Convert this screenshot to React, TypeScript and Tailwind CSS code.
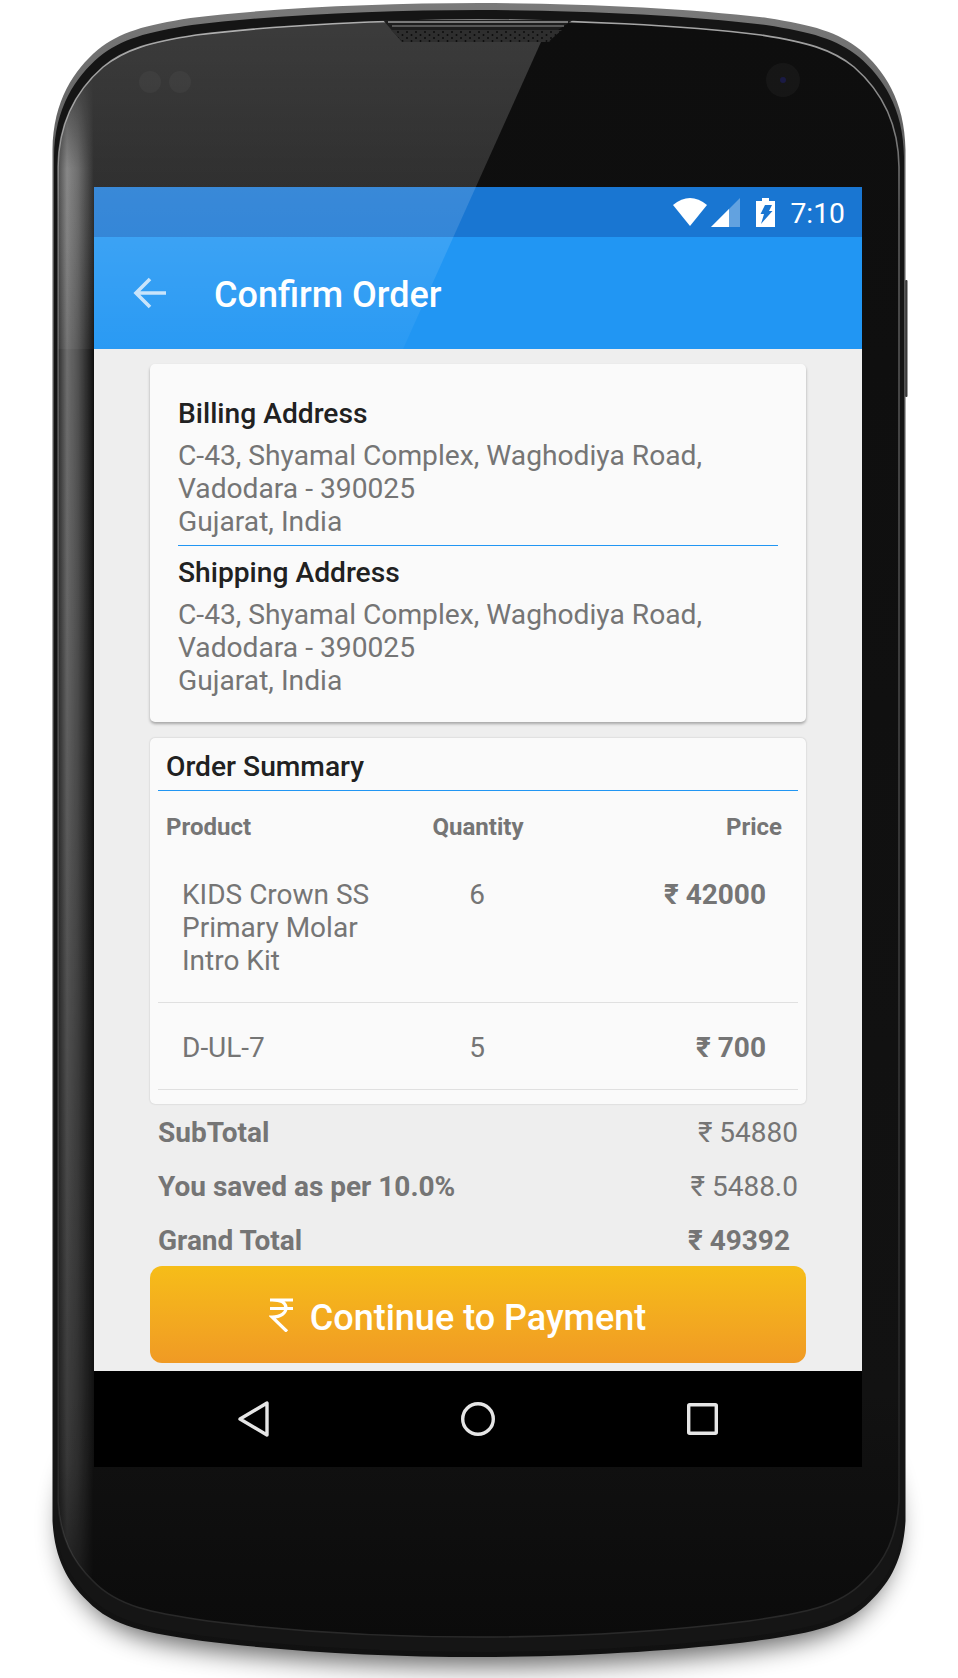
import React from "react";

// outline of the phone, inset by ix / top / bottom
function phoneShape(x0: number, x1: number, y0: number, y1: number) {
  const c = (x0 + x1) / 2;
  return [
    `M${x0} ${y0 + 147}`,
    `C${x0 + 0.5} ${y0 + 97} ${x0 + 22} ${y0 + 67} ${x0 + 45} ${y0 + 47}`,
    `C${x0 + 67} ${y0 + 29} ${x0 + 93} ${y0 + 22} ${x0 + 138} ${y0 + 15}`,
    `C${x0 + 218} ${y0 + 5} ${x0 + 328} ${y0} ${c} ${y0}`,
    `C${x1 - 328} ${y0} ${x1 - 218} ${y0 + 5} ${x1 - 138} ${y0 + 15}`,
    `C${x1 - 93} ${y0 + 22} ${x1 - 67} ${y0 + 29} ${x1 - 45} ${y0 + 47}`,
    `C${x1 - 22} ${y0 + 67} ${x1 - 0.5} ${y0 + 97} ${x1} ${y0 + 147}`,
    `L${x1} ${y1 - 136}`,
    `C${x1 - 2} ${y1 - 100} ${x1 - 14} ${y1 - 76} ${x1 - 35} ${y1 - 56}`,
    `C${x1 - 60} ${y1 - 30} ${x1 - 95} ${y1 - 24} ${x1 - 150} ${y1 - 16}`,
    `C${x1 - 230} ${y1 - 6} ${x1 - 330} ${y1} ${c} ${y1}`,
    `C${x0 + 330} ${y1} ${x0 + 230} ${y1 - 6} ${x0 + 150} ${y1 - 16}`,
    `C${x0 + 95} ${y1 - 24} ${x0 + 60} ${y1 - 30} ${x0 + 35} ${y1 - 56}`,
    `C${x0 + 14} ${y1 - 76} ${x0 + 2} ${y1 - 100} ${x0} ${y1 - 136}`,
    "Z",
  ].join(" ");
}

const OUTER = phoneShape(52.5, 905.5, 3, 1657);
const MID = phoneShape(54, 904, 10, 1652);
const GLASS = phoneShape(58, 899, 20, 1637);

function PhoneBody() {
  return (
    <svg className="absolute inset-0" width="958" height="1678" viewBox="0 0 958 1678">
      <defs>
        <linearGradient id="rim" x1="0" y1="0" x2="0" y2="1">
          <stop offset="0" stopColor="#7a7a7a" />
          <stop offset="0.1" stopColor="#5c5c5c" />
          <stop offset="0.5" stopColor="#404040" />
          <stop offset="0.85" stopColor="#171717" />
          <stop offset="1" stopColor="#111111" />
        </linearGradient>
        <linearGradient id="glassFill" x1="0" y1="0" x2="0" y2="1">
          <stop offset="0" stopColor="#0e0e0e" />
          <stop offset="0.85" stopColor="#121212" />
          <stop offset="1" stopColor="#0b0b0b" />
        </linearGradient>
        <linearGradient id="edgeLine" x1="0" y1="0" x2="0" y2="1">
          <stop offset="0" stopColor="#a8a8a8" />
          <stop offset="0.12" stopColor="#5a5a5a" />
          <stop offset="0.9" stopColor="#222222" />
          <stop offset="1" stopColor="#2a2a2a" />
        </linearGradient>
        <linearGradient id="band" x1="0" y1="0" x2="1" y2="0">
          <stop offset="0" stopColor="#fff" stopOpacity="0.14" />
          <stop offset="0.25" stopColor="#fff" stopOpacity="0.42" />
          <stop offset="0.55" stopColor="#fff" stopOpacity="0.3" />
          <stop offset="1" stopColor="#fff" stopOpacity="0" />
        </linearGradient>
        <linearGradient id="bandFade" x1="0" y1="0" x2="0" y2="1">
          <stop offset="0" stopColor="#000" />
          <stop offset="0.07" stopColor="#fff" />
          <stop offset="0.35" stopColor="#ddd" />
          <stop offset="0.9" stopColor="#666" />
          <stop offset="1" stopColor="#222" />
        </linearGradient>
        <mask id="bandMask">
          <rect x="0" y="60" width="958" height="1560" fill="url(#bandFade)" />
        </mask>
        <clipPath id="glassClip">
          <path d={GLASS} />
        </clipPath>
        <filter id="soft" x="-10%" y="-10%" width="120%" height="120%">
          <feGaussianBlur stdDeviation="13" />
        </filter>
      </defs>
      {/* floor shadow */}
      <path d={phoneShape(62, 896, 1380, 1666)} fill="#000" opacity="0.6" filter="url(#soft)" />
      {/* side button */}
      <rect x="905" y="280" width="2.5" height="117" rx="1" fill="#3a3a3a" />
      <path d={OUTER} fill="url(#rim)" />
      <path d={MID} fill="#151515" />
      <path d={GLASS} fill="url(#glassFill)" stroke="url(#edgeLine)" strokeWidth="1.6" />
      <g clipPath="url(#glassClip)">
        <rect x="58" y="60" width="36" height="1560" fill="url(#band)" mask="url(#bandMask)" />
      </g>
      {/* sensors + camera */}
      <circle cx="150" cy="82" r="11" fill="#fff" opacity="0.035" />
      <circle cx="180" cy="82" r="11" fill="#fff" opacity="0.035" />
      <circle cx="783" cy="80" r="17" fill="#fff" opacity="0.035" />
      <circle cx="783" cy="80" r="3" fill="#1a1a44" />
    </svg>
  );
}

function GlassOverlay() {
  return (
    <svg className="absolute inset-0 pointer-events-none" width="958" height="1678" viewBox="0 0 958 1678">
      <defs>
        <linearGradient id="glare" gradientUnits="userSpaceOnUse" x1="0" y1="20" x2="0" y2="349">
          <stop offset="0" stopColor="#fff" stopOpacity="0.19" />
          <stop offset="0.5" stopColor="#fff" stopOpacity="0.14" />
          <stop offset="0.66" stopColor="#fff" stopOpacity="0.12" />
          <stop offset="1" stopColor="#fff" stopOpacity="0.04" />
        </linearGradient>
        <clipPath id="glareClip">
          <path d={GLASS} />
        </clipPath>
        <pattern id="grille" width="9" height="6" patternUnits="userSpaceOnUse">
          <rect width="9" height="6" fill="#2e2e2e" />
          <circle cx="2" cy="2" r="1" fill="#0c0c0c" />
          <circle cx="6.5" cy="5" r="1" fill="#0c0c0c" />
        </pattern>
      </defs>
      <polygon
        points="50,0 545,0 541,42 403,349 50,349"
        fill="url(#glare)"
        clipPath="url(#glareClip)"
      />
      {/* speaker notch */}
      <path d="M383 20 L573 20 L552 34 L550 42 L402 42 Z" fill="#1d1d1d" />
      <path d="M388 22 L568 22" stroke="#9a9a9a" strokeWidth="1.5" />
      <path d="M392 26 L564 26" stroke="#6a6a6a" strokeWidth="1.5" />
      <path d="M391 30 L562 30 L548 42 L403 42 Z" fill="url(#grille)" />
    </svg>
  );
}

function StatusBar() {
  return (
    <div className="h-[50px] bg-[#1976d2] flex items-center justify-end pr-[17px] text-white">
      <svg width="34" height="28" viewBox="0 0 34 28" fill="#fff">
        <path d="M0 7 Q17 -7 34 7 L17 28 Z" />
      </svg>
      <svg className="ml-[4px]" width="29" height="29" viewBox="0 0 29 29" fill="#fff">
        <path d="M0 29 L29 0 L29 29 Z" opacity="0.32" />
        <path d="M0 29 L18 11 L18 29 Z" />
      </svg>
      <svg className="ml-[16px]" width="19" height="29" viewBox="0 0 19 29" fill="#fff">
        <path d="M6 0 H13 V3 H19 V29 H0 V3 H6 Z" />
        <path d="M9 7 L16 7 L13 13 L16.5 13 L5 26 L8 16 L4.5 16 Z" fill="#1976d2" />
      </svg>
      <span className="ml-[15px] pt-[2px] text-[28.3px] leading-[33px]">7:10</span>
    </div>
  );
}

function AppBar() {
  return (
    <div className="h-[112px] bg-[#2196f3] flex items-center text-white">
      <svg className="ml-[39px]" width="34" height="34" viewBox="0 0 34 34" fill="none" stroke="#c4e2fb" strokeWidth="3.6">
        <path d="M33 17 H3 M17 3 L3 17 L17 31" />
      </svg>
      <h1 className="ml-[47px] mt-[3px] text-[36px] leading-[40px] font-medium">Confirm Order</h1>
    </div>
  );
}

function AddressBlock({ title }: { title: string }) {
  return (
    <div>
      <h2 className="pt-[1px] text-[28.2px] leading-[33px] font-medium text-[#212121]">{title}</h2>
      <p className="mt-[9px] text-[28.2px] leading-[33px] text-[#757575]">
        C-43, Shyamal Complex, Waghodiya Road,
        <br />
        Vadodara - 390025
        <br />
        Gujarat, India
      </p>
    </div>
  );
}

function OrderRow({ name, qty, price, className }: { name: string; qty: string; price: string; className: string }) {
  return (
    <div className={`grid grid-cols-[240px_160px_240px] border-b border-[#e0e0e0] text-[28px] leading-[33px] text-[#757575] ${className}`}>
      <div className="pl-[24px]">{name}</div>
      <div className="pr-[2px] text-center">{qty}</div>
      <div className="pr-[32px] text-right font-bold">{price}</div>
    </div>
  );
}

function TotalRow({ label, value, bold }: { label: string; value: string; bold?: boolean }) {
  return (
    <div className="h-[54px] pt-[4px] flex items-center justify-between text-[28px] text-[#757575]">
      <span className="font-bold">{label}</span>
      <span className={bold ? "font-bold pr-[8px]" : ""}>{value}</span>
    </div>
  );
}

export default function App() {
  return (
    <div className="relative w-[958px] h-[1678px] bg-white overflow-hidden [font-family:Roboto,sans-serif]">
      <PhoneBody />

      <div className="relative pt-[187px] pl-[94px]">
        <div className="w-[768px]">
          <StatusBar />
          <AppBar />

          <main className="h-[1022px] bg-[#eeeeee] pt-[15px]">
            <section className="w-[656px] h-[358px] mx-auto bg-[#fafafa] rounded-[5px] shadow-[0_2px_3px_rgba(0,0,0,0.3)] pt-[32px] px-[28px]">
              <AddressBlock title="Billing Address" />
              <div className="mt-[7px] mb-[9px] h-px bg-[#2196f3]" />
              <AddressBlock title="Shipping Address" />
            </section>

            <section className="mt-[16px] w-[656px] h-[366px] mx-auto bg-[#fafafa] rounded-[5px] shadow-[0_0_2px_rgba(0,0,0,0.2)] px-[8px] overflow-hidden">
              <div className="h-[53px] pt-[6px] pl-[8px] flex items-center border-b border-[#2196f3] text-[28.2px] font-medium text-[#212121]">
                Order Summary
              </div>
              <div className="grid grid-cols-[240px_160px_240px] h-[72px] items-center text-[24px] font-bold text-[#757575]">
                <div className="pl-[8px]">Product</div>
                <div className="text-center">Quantity</div>
                <div className="pr-[16px] text-right">Price</div>
              </div>
              <OrderRow className="pt-[15px] pb-[25px]" name="KIDS Crown SS Primary Molar Intro Kit" qty="6" price="₹ 42000" />
              <OrderRow className="pt-[28px] pb-[25px]" name="D-UL-7" qty="5" price="₹ 700" />
            </section>

            <div className="mx-[64px]">
              <TotalRow label="SubTotal" value="₹ 54880" />
              <TotalRow label="You saved as per 10.0%" value="₹ 5488.0" />
              <TotalRow label="Grand Total" value="₹ 49392" bold />
            </div>

            <button className="block w-[656px] h-[97px] mx-auto rounded-[12px] bg-gradient-to-b from-[#f6bd18] to-[#f09a24] text-white">
              <span className="flex items-center justify-center gap-[17px] pr-[41px] text-[36px] font-medium">
                <svg width="24" height="34" viewBox="0 0 24 34" fill="none" stroke="#fff" strokeWidth="3.2">
                  <path d="M1 2 H24 M1 10.5 H24 M3 2 C15 2 17 6 17 10 C17 15 12 19 3 19 L18 33.5" />
                </svg>
                <span className="mt-[7px]">Continue to Payment</span>
              </span>
            </button>
          </main>

          <nav className="h-[96px] bg-black flex items-center pl-[144px] gap-[192px]">
            <svg width="31" height="36" viewBox="0 0 31 36" fill="none" stroke="#e6e6e6" strokeWidth="3.4" strokeLinejoin="round">
              <path d="M29 2 V34 L2 18 Z" />
            </svg>
            <svg width="34" height="34" viewBox="0 0 34 34" fill="none" stroke="#e6e6e6" strokeWidth="3.4">
              <circle cx="17" cy="17" r="15.3" />
            </svg>
            <svg width="31" height="32" viewBox="0 0 31 32" fill="none" stroke="#e6e6e6" strokeWidth="3.4" strokeLinejoin="round">
              <rect x="1.7" y="1.7" width="27.6" height="28.6" rx="1" />
            </svg>
          </nav>
        </div>
      </div>

      <GlassOverlay />
    </div>
  );
}
